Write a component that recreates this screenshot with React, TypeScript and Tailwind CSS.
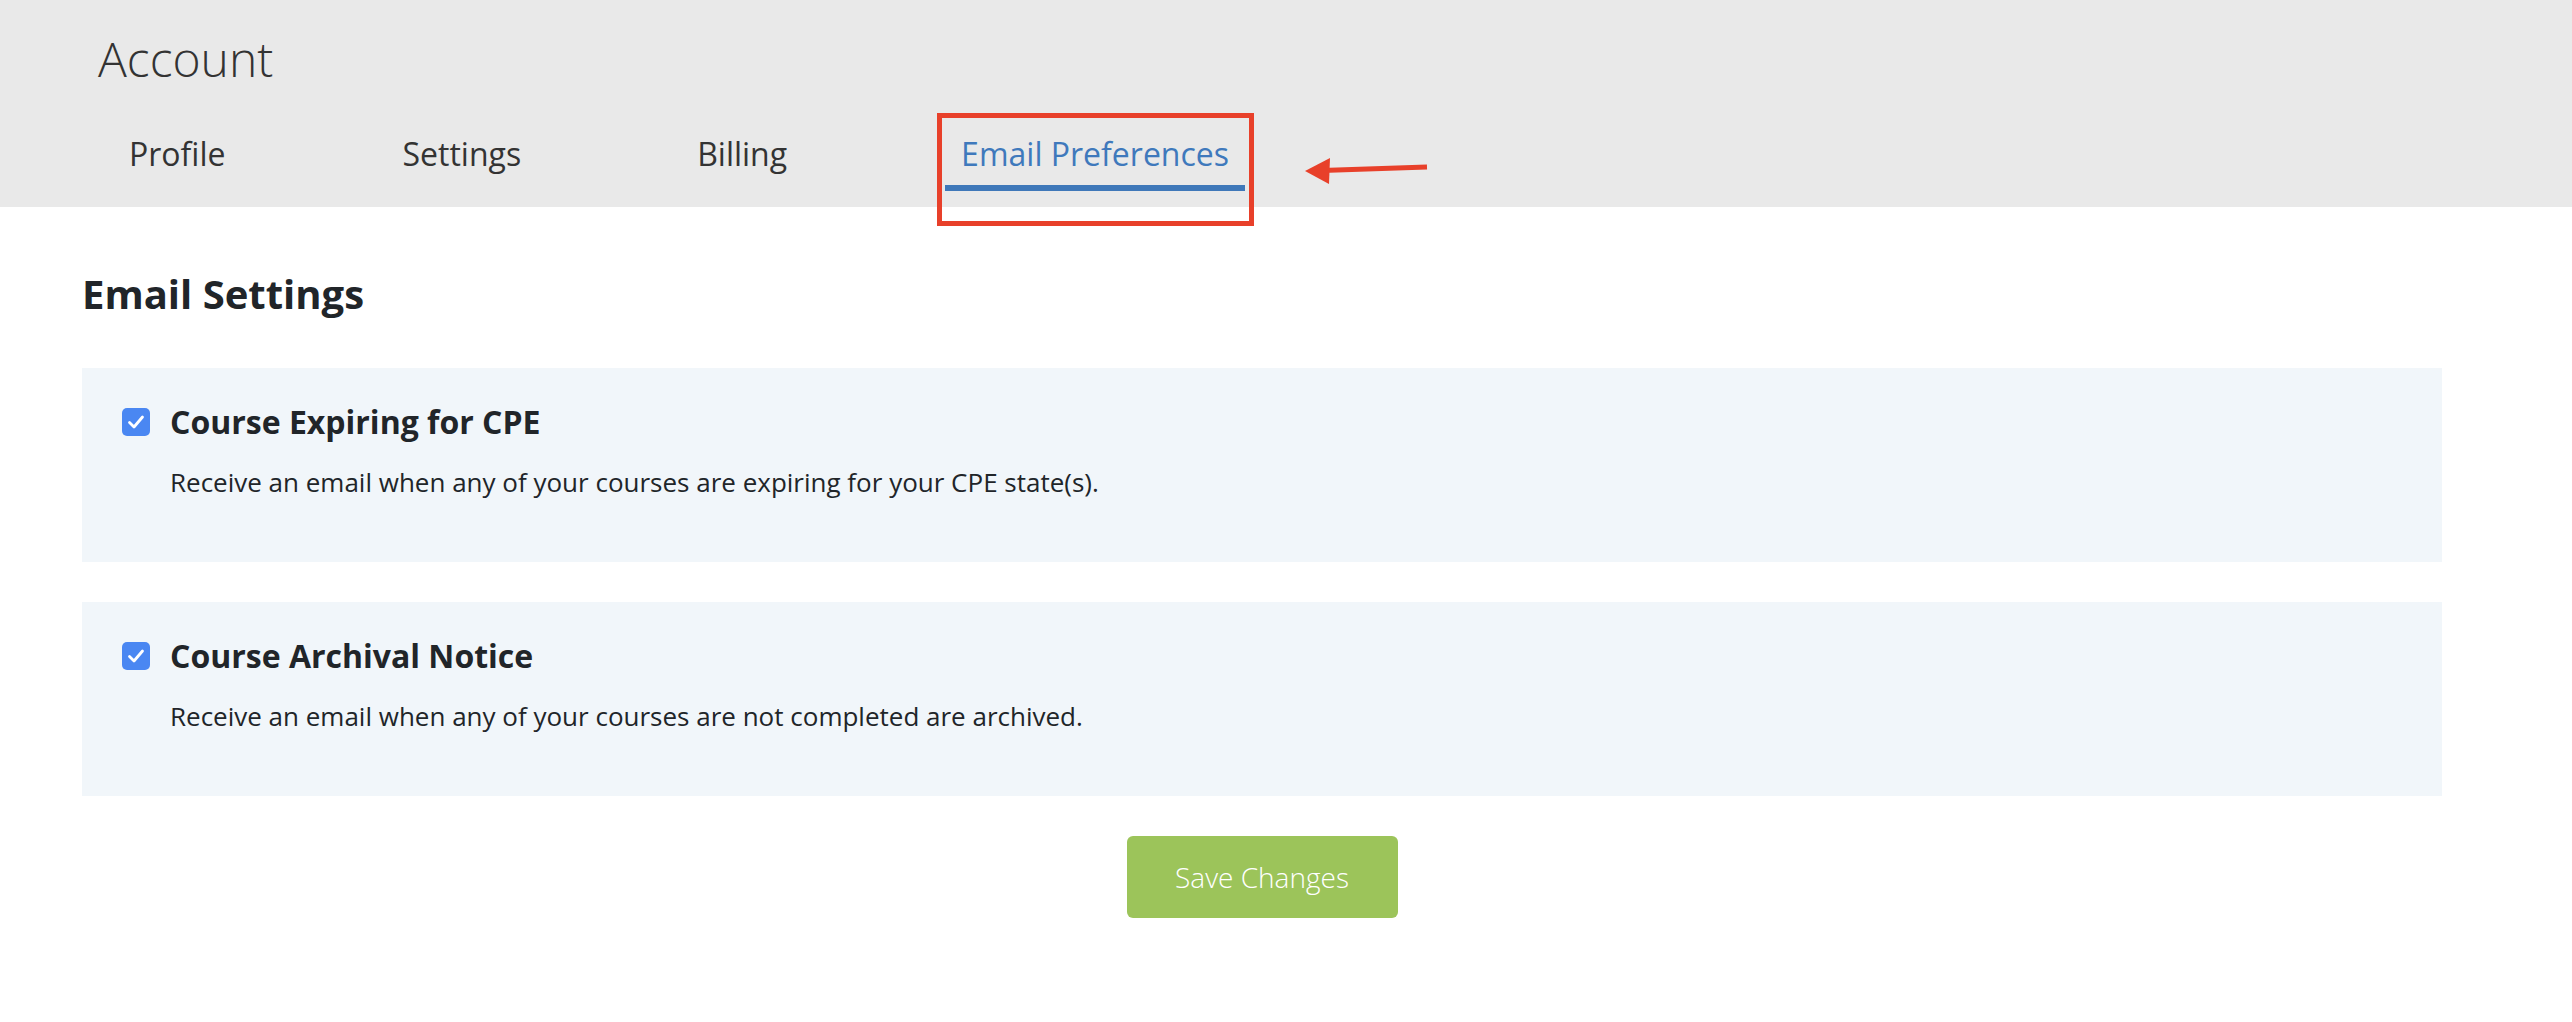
import React from "react";

const font = { fontFamily: '"Open Sans", "Noto Sans", sans-serif' };

function Check() {
  return (
    <div className="w-[28px] h-[28px] rounded-[5px] bg-[#4a87f2] flex items-center justify-center shrink-0">
      <svg width="22" height="22" viewBox="0 0 22 22" fill="none">
        <path d="M4.5 11.5 L9 16 L17.5 6" stroke="white" strokeWidth="2.8" strokeLinecap="round" strokeLinejoin="round" />
      </svg>
    </div>
  );
}

function Panel({ title, desc }: { title: string; desc: string }) {
  return (
    <div className="bg-[#f1f6fa] pt-[30px] pb-[60px] pl-[40px]">
      <div className="flex items-center gap-[20px]">
        <Check />
        <div className="text-[32px] leading-[48px] font-bold text-[#212529]">{title}</div>
      </div>
      <div className="mt-[17px] pl-[48px] text-[26px] leading-[39px] text-[#212529]">{desc}</div>
    </div>
  );
}

export default function App() {
  const tabs = [
    { t: "Profile", m: "ml-0" },
    { t: "Settings", m: "ml-[145px]" },
    { t: "Billing", m: "ml-[144px]" },
    { t: "Email Preferences", m: "ml-[142px]" },
  ];
  return (
    <div className="relative w-[2572px] h-[1022px] bg-white overflow-hidden" style={font}>
      <div className="h-[207px] bg-[#e9e9e9] pl-[98px] pt-[30px]">
        <div className="text-[48px] leading-[58px] font-light text-[#333333]">Account</div>
        <div className="mt-[42px] ml-[15px] flex">
          {tabs.map((x, i) => {
            const active = i === 3;
            return (
              <div key={x.t} className={`flex flex-col ${x.m}`}>
                <div className={`px-4 text-[32px] leading-[48px] ${active ? "text-[#3f79bc]" : "text-[#333333]"}`}>{x.t}</div>
                <div className={`mt-[7px] h-[6px] ${active ? "bg-[#3f78b9]" : "bg-transparent"}`} />
              </div>
            );
          })}
        </div>
      </div>

      <div className="ml-[82px] w-[2360px]">
        <div className="mt-[63px] text-[40px] leading-[48px] font-bold text-[#212529]">Email Settings</div>
        <div className="mt-[50px] flex flex-col gap-[40px]">
          <Panel title="Course Expiring for CPE" desc="Receive an email when any of your courses are expiring for your CPE state(s)." />
          <Panel title="Course Archival Notice" desc="Receive an email when any of your courses are not completed are archived." />
        </div>
        <div className="mt-[40px] flex justify-center">
          <button className="w-[271px] h-[82px] rounded-[6px] bg-[#9cc45a] text-white text-[28px] font-light">Save Changes</button>
        </div>
      </div>

      <div className="absolute left-[937px] top-[113px] w-[317px] h-[113px] border-[5px] border-[#e8402a]" />
      <svg className="absolute left-[1290px] top-[150px]" width="150" height="40" viewBox="1290 150 150 40">
        <path d="M1427 167 L1322 170.5" stroke="#e8402a" strokeWidth="5" strokeLinecap="butt" />
        <polygon points="1305,171 1330,158 1329,184" fill="#e8402a" />
      </svg>
    </div>
  );
}
